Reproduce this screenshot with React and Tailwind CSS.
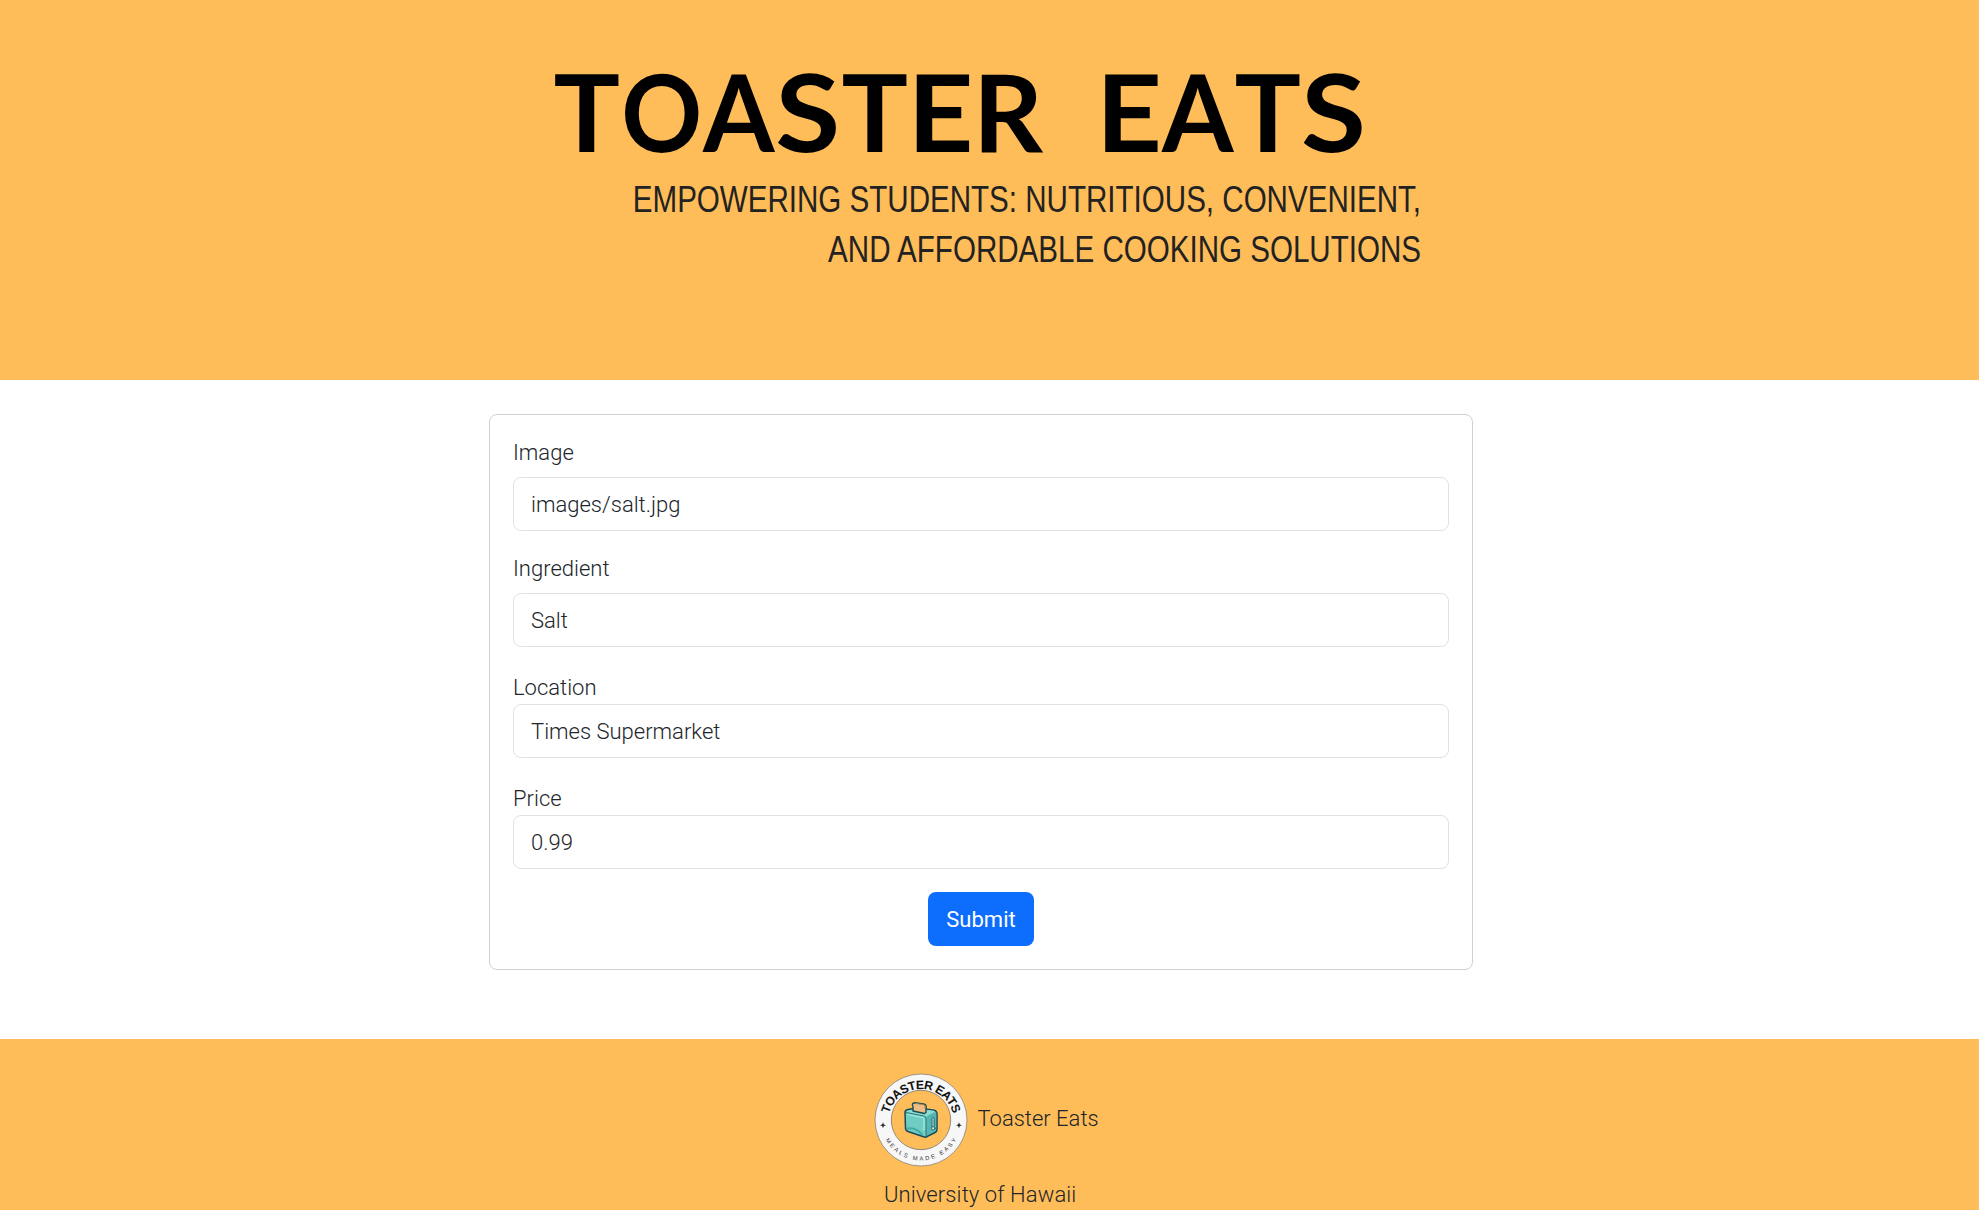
const titleLetters = [
  { char: 'T', x: 553.5, width: 66.5 },
  { char: 'O', x: 621.2, width: 81 },
  { char: 'A', x: 703, width: 71.5 },
  { char: 'S', x: 775.3, width: 65 },
  { char: 'T', x: 841.5, width: 66.5 },
  { char: 'E', x: 907.4, width: 66 },
  { char: 'R', x: 973, width: 70 },
  { char: 'E', x: 1096, width: 66 },
  { char: 'A', x: 1162, width: 71.5 },
  { char: 'T', x: 1234.5, width: 66.5 },
  { char: 'S', x: 1301, width: 65 },
];

function Field({ id, label, value, className = '', labelClass }) {
  return (
    <div className={className}>
      <label htmlFor={id} className={`block h-[30px] leading-[30px] ${labelClass}`}>{label}</label>
      <input
        id={id}
        defaultValue={value}
        className="block h-[54px] w-full rounded-lg border border-[#dee2e6] bg-white px-[17px] outline-none"
      />
    </div>
  );
}

function Logo() {
  return (
    <svg viewBox="-47 -47 94 94" className="h-[94px] w-[94px] shrink-0">
      <defs>
        <path id="arcTop" d="M-33 2A33 33 0 0 1 33 2" />
        <path id="arcBottom" d="M-40.5 0A40.5 40.5 0 0 0 40.5 0" />
      </defs>
      <circle r="46" fill="#f7f7f7" stroke="#77736b" strokeWidth="0.7" />
      <circle r="29.7" fill="#ffbd59" stroke="#77736b" strokeWidth="0.8" />
      <text fontFamily="Liberation Sans" fontWeight="700" fontSize="12.2" fill="#111" textAnchor="middle">
        <textPath href="#arcTop" startOffset="50%" textLength="87" lengthAdjust="spacing">TOASTER EATS</textPath>
      </text>
      <text fontFamily="Liberation Sans" fontSize="5.8" fill="#333" textAnchor="middle">
        <textPath href="#arcBottom" startOffset="50%" textLength="86" lengthAdjust="spacing">MEALS MADE EASY</textPath>
      </text>
      <path d="M-38 2.2L-37.2 4.4L-35 5.2L-37.2 6L-38 8.2L-38.8 6L-41 5.2L-38.8 4.4Z" fill="#222" />
      <path d="M38 2.2L38.8 4.4L41 5.2L38.8 6L38 8.2L37.2 6L35 5.2L37.2 4.4Z" fill="#222" />
      <g strokeLinejoin="round" strokeLinecap="round">
        <path d="M-16-7.5Q-16-10-13-10.5L-4-12L12-10Q16-9.5 16-6V9.5Q16 11.5 14 12.5L5 17Q4 17.5 2.5 16.8L-13 11.5Q-15.5 10.5-15.5 8Z" fill="#6fcdc3" stroke="#174b57" strokeWidth="1.5" />
        <path d="M-15-8.5L-4-11.5L14-9L5-3.5Z" fill="#8bddd2" />
        <path d="M5.5-2.5Q6-4 8-5L15.2-8V9.5L5 16Z" fill="#55b5b0" />
        <path d="M-15-7.5L3-4Q5-3.5 5-1V15.5" fill="none" stroke="#26616a" strokeWidth="0.8" />
        <path d="M-13.5-5.5L1.5-2.5Q3-2 3 0V10" fill="none" stroke="#a9eee2" strokeWidth="1.1" />
        <path d="M-13.5 8.5Q-5 7 1 14.5" fill="none" stroke="#45a9a7" strokeWidth="1.8" />
        <path d="M-8-9V-13.5Q-10-17-6-17.3L2.5-16Q6-15.5 5-12V-7.5L3.5-6.5Z" fill="#edbd83" stroke="#174b57" strokeWidth="1.4" />
        <path d="M-5.5-16.5L2-15.5Q4.5-15 4-12" fill="none" stroke="#bd8454" strokeWidth="0.9" />
        <path d="M11 6V-1.5Q12-4 13-2V6" fill="#b8eee6" stroke="#174b57" strokeWidth="0.8" />
        <circle cx="12.2" cy="8.3" r="1.7" fill="#e2e6df" stroke="#174b57" strokeWidth="0.8" />
      </g>
    </svg>
  );
}

export default function App() {
  return (
    <div className="flex h-[1210px] w-[1979px] flex-col overflow-hidden bg-white font-[Roboto,sans-serif] text-[22px] font-light text-[#212529]">
      <header className="flex h-[380px] shrink-0 flex-col bg-[#ffbd59]">
        <svg viewBox="0 0 1979 180" className="h-[180px] w-full shrink-0 overflow-visible" role="img">
          <text y="152" fontFamily="Lato" fontWeight="700" fontSize="107" fill="#000">
            {titleLetters.map(({ char, x, width }) => (
              <tspan key={x} x={x} textLength={width} lengthAdjust="spacingAndGlyphs">{char}</tspan>
            ))}
          </text>
        </svg>
        <div className="-mt-[5px] flex w-[1421px] origin-right scale-x-[0.821] flex-col items-end font-['Liberation_Sans',sans-serif] text-[36px] font-normal leading-[50px] whitespace-nowrap text-[#222]">
          <p>EMPOWERING STUDENTS: NUTRITIOUS, CONVENIENT,</p>
          <p>AND AFFORDABLE COOKING SOLUTIONS</p>
        </div>
      </header>
      <main className="h-[659px] shrink-0 pt-[34px]">
        <form className="ml-[489px] flex h-[556px] w-[984px] flex-col rounded-lg border border-[#ced0d2] px-[23px] pt-[23px]">
          <Field id="image" label="Image" value="images/salt.jpg" labelClass="mb-[9px]" />
          <Field id="ingredient" label="Ingredient" value="Salt" className="mt-[23px]" labelClass="mb-[9px]" />
          <Field id="location" label="Location" value="Times Supermarket" className="mt-[26px]" labelClass="mb-px" />
          <Field id="price" label="Price" value="0.99" className="mt-[26px]" labelClass="mb-px" />
          <button type="button" className="mt-[23px] h-[54px] w-[106px] self-center rounded-lg bg-[#0d6efd] font-normal text-white">Submit</button>
        </form>
      </main>
      <footer className="flex w-full grow flex-col bg-[#ffbd59] pt-[34px]">
        <div className="ml-[873.5px] flex items-center gap-[10px]">
          <Logo />
          <span className="pb-[4px]">Toaster Eats</span>
        </div>
        <p className="ml-[884px] mt-[11px] leading-[34px] tracking-[0.1px]">University of Hawaii</p>
      </footer>
    </div>
  );
}
